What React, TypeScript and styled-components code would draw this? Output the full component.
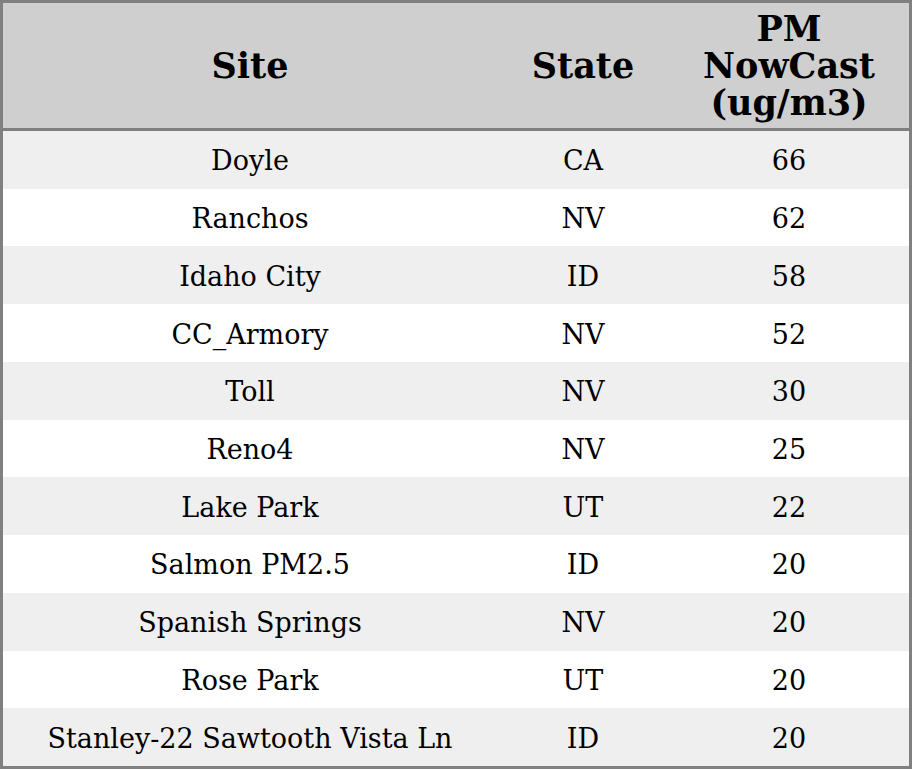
import React from 'react'
import styled, { createGlobalStyle } from 'styled-components'

const GlobalStyle = createGlobalStyle`
  html, body {
    margin: 0;
    padding: 0;
    background: #ffffff;
  }
  body {
    font-family: 'DejaVu Serif', 'Liberation Serif', serif;
    color: #000000;
  }
`

const StyledTable = styled.div`
  box-sizing: border-box;
  width: 912px;
  height: 769px;
  border: 3px solid #808080;
  display: flex;
  flex-direction: column;
`

const StyledHeader = styled.div`
  display: grid;
  grid-template-columns: 494px 172px 240px;
  height: 125px;
  background: #cfcfcf;
  border-bottom: 3px solid #808080;
  font-size: 35px;
  font-weight: 700;
  line-height: 37px;
`

const StyledHeadCell = styled.div`
  display: flex;
  align-items: center;
  justify-content: center;
  text-align: center;
`

const StyledBody = styled.div`
  flex: 1;
  display: grid;
  grid-template-rows: repeat(11, 1fr);
`

const StyledRow = styled.div<{ $shaded: boolean }>`
  display: grid;
  grid-template-columns: 494px 172px 240px;
  background: ${(p) => (p.$shaded ? '#efefef' : '#ffffff')};
  font-size: 27px;
`

const StyledCell = styled.div`
  display: flex;
  align-items: center;
  justify-content: center;
  padding-top: 2px;
  white-space: nowrap;
`

const rows: [string, string, number][] = [
  ['Doyle', 'CA', 66],
  ['Ranchos', 'NV', 62],
  ['Idaho City', 'ID', 58],
  ['CC_Armory', 'NV', 52],
  ['Toll', 'NV', 30],
  ['Reno4', 'NV', 25],
  ['Lake Park', 'UT', 22],
  ['Salmon PM2.5', 'ID', 20],
  ['Spanish Springs', 'NV', 20],
  ['Rose Park', 'UT', 20],
  ['Stanley-22 Sawtooth Vista Ln', 'ID', 20],
]

const App: React.FC = () => {
  return (
    <>
      <GlobalStyle />
      <StyledTable>
        <StyledHeader>
          <StyledHeadCell>Site</StyledHeadCell>
          <StyledHeadCell>State</StyledHeadCell>
          <StyledHeadCell>
            PM
            <br />
            NowCast
            <br />
            (ug/m3)
          </StyledHeadCell>
        </StyledHeader>
        <StyledBody>
          {rows.map(([site, state, value], i) => (
            <StyledRow key={site} $shaded={i % 2 === 0}>
              <StyledCell>{site}</StyledCell>
              <StyledCell>{state}</StyledCell>
              <StyledCell>{value}</StyledCell>
            </StyledRow>
          ))}
        </StyledBody>
      </StyledTable>
    </>
  )
}

export default App
